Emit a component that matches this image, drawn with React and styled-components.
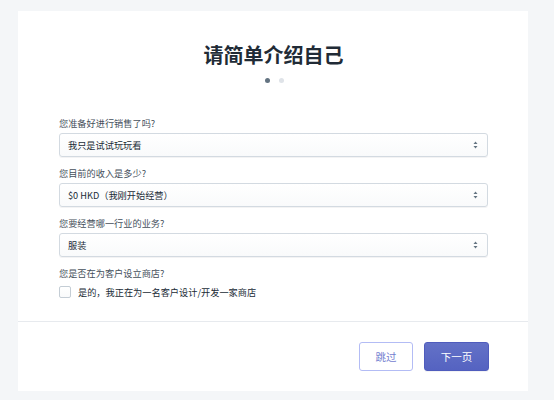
import React from 'react';
import styled, { createGlobalStyle } from 'styled-components';

const GlobalStyle = createGlobalStyle`
  html, body {
    margin: 0;
    padding: 0;
    background: #f4f6f8;
  }
  body {
    font-family: 'Noto Sans CJK SC', 'Noto Sans', 'Liberation Sans', sans-serif;
  }
`;

const Page = styled.div`
  width: 554px;
  height: 400px;
  padding: 11px 26px 0 18px;
  box-sizing: border-box;
`;

const Card = styled.div`
  height: 380px;
  background: #fff;
  display: flex;
  flex-direction: column;
`;

const Body = styled.div`
  flex: 1;
  padding: 32px 40px 0 41px;
`;

const Title = styled.h1`
  margin: 0;
  text-align: center;
  font-size: 20px;
  line-height: 24px;
  font-weight: 700;
  color: #212b36;
`;

const Dots = styled.div`
  display: flex;
  justify-content: center;
  gap: 9px;
  margin-top: 11px;
  padding-left: 2px;
`;

const Dot = styled.span`
  width: 5px;
  height: 5px;
  border-radius: 50%;
  background: ${p => (p.active ? '#637381' : '#dfe3e8')};
`;

const Form = styled.div`
  margin-top: 34px;
  display: flex;
  flex-direction: column;
  gap: 10px;
`;

const Field = styled.div`
  display: flex;
  flex-direction: column;
  gap: 4px;
`;

const Label = styled.div`
  font-size: 9.2px;
  line-height: 12px;
  color: #454f5b;
`;

const SelectBox = styled.div`
  height: 24px;
  box-sizing: border-box;
  border: 1px solid #d3dae1;
  border-radius: 3px;
  background: linear-gradient(180deg, #ffffff, #f9fafb);
  box-shadow: 0 1px 0 rgba(22, 29, 37, 0.05);
  display: flex;
  align-items: center;
  justify-content: space-between;
  padding: 0 9px 0 8px;
  font-size: 9.2px;
  color: #212b36;
`;

const CheckRow = styled.label`
  display: flex;
  align-items: center;
  gap: 7px;
  margin-top: 2px;
  font-size: 9.2px;
  color: #212b36;
`;

const Check = styled.span`
  width: 10px;
  height: 10px;
  border: 1px solid #c4cdd5;
  border-radius: 2px;
  background: linear-gradient(180deg, #ffffff, #f9fafb);
`;

const Footer = styled.div`
  border-top: 1px solid #e7eaee;
  padding: 20px 39px 20px 0;
  display: flex;
  justify-content: flex-end;
  gap: 11px;
`;

const Button = styled.button`
  height: 29px;
  padding: 0;
  width: ${p => p.w}px;
  box-sizing: border-box;
  border-radius: 3px;
  font-family: inherit;
  font-size: 10.5px;
  border: 1px solid ${p => (p.primary ? '#4f5cbd' : '#b3bcf5')};
  background: ${p => (p.primary ? 'linear-gradient(180deg, #6371c7, #5563c1)' : '#fff')};
  color: ${p => (p.primary ? '#fff' : '#7480d0')};
  box-shadow: ${p => (p.primary ? '0 1px 0 rgba(22,29,37,0.05)' : 'none')};
`;

const Arrows = () => (
  <svg width="5" height="8" viewBox="0 0 5 8">
    <path d="M2.5 0.5 L4.5 3 H0.5 Z" fill="#637381" />
    <path d="M2.5 7.5 L4.5 5 H0.5 Z" fill="#637381" />
  </svg>
);

const fields = [
  { label: '您准备好进行销售了吗?', value: '我只是试试玩玩看' },
  { label: '您目前的收入是多少?', value: '$0 HKD（我刚开始经营）' },
  { label: '您要经营哪一行业的业务?', value: '服装' },
];

export default function App() {
  return (
    <Page>
      <GlobalStyle />
      <Card>
        <Body>
          <Title>请简单介绍自己</Title>
          <Dots>
            <Dot active />
            <Dot />
          </Dots>
          <Form>
            {fields.map(f => (
              <Field key={f.label}>
                <Label>{f.label}</Label>
                <SelectBox>
                  <span>{f.value}</span>
                  <Arrows />
                </SelectBox>
              </Field>
            ))}
            <Field>
              <Label>您是否在为客户设立商店?</Label>
              <CheckRow>
                <Check />
                是的，我正在为一名客户设计/开发一家商店
              </CheckRow>
            </Field>
          </Form>
        </Body>
        <Footer>
          <Button w={54}>跳过</Button>
          <Button primary w={65}>下一页</Button>
        </Footer>
      </Card>
    </Page>
  );
}
